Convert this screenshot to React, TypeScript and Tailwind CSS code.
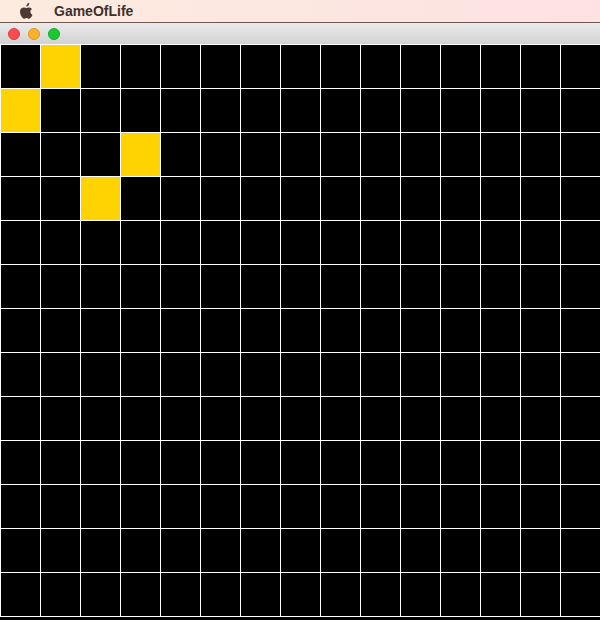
import React from "react";

const ROWS = 13;
const COLS = 15;
const alive = new Set(["0-1", "1-0", "2-3", "3-2"]);

export default function App() {
  const cells = [];
  for (let r = 0; r < ROWS; r++) {
    for (let c = 0; c < COLS; c++) {
      const on = alive.has(`${r}-${c}`);
      cells.push(
        <div key={`${r}-${c}`} className={on ? "bg-[#ffd300]" : "bg-black"} />
      );
    }
  }
  return (
    <div className="w-[600px] h-[620px] bg-black flex flex-col overflow-hidden" style={{ fontFamily: '"Liberation Sans", Arial, sans-serif' }}>
      <div className="h-[23px] flex items-center bg-gradient-to-r from-[#fcebdf] to-[#fde2e2] border-b border-[#6e5550]">
        <svg className="ml-[20px] mb-[1px]" width="14" height="16" viewBox="0 0 170 200" fill="#4b3b34">
          <path d="M150.4 155.6c-2.8 6.4-6.1 12.3-9.900 17.8-5.2 7.4-9.5 12.6-12.7 15.4-5.1 4.7-10.5 7.1-16.3 7.2-4.2 0-9.2-1.2-15.1-3.6-5.9-2.4-11.3-3.6-16.3-3.6-5.2 0-10.8 1.2-16.8 3.6-6 2.4-10.9 3.7-14.5 3.8-5.6.2-11.2-2.2-16.8-7.4-3.6-3.1-8.1-8.5-13.4-16.1-5.700-8.1-10.5-17.5-14.100-28.2C-.6 133-2.6 121.8-2.6 111c0-12.4 2.7-23.1 8-32.1 4.2-7.1 9.8-12.8 16.8-17 7-4.2 14.6-6.3 22.7-6.5 4.5 0 10.3 1.4 17.6 4.1 7.3 2.7 12 4.1 14 4.1 1.5 0 6.7-1.6 15.5-4.9 8.3-3 15.3-4.2 21.1-3.7 15.6 1.3 27.3 7.4 35.1 18.5-14 8.5-20.9 20.3-20.7 35.5.1 11.8 4.4 21.700 12.9 29.5 3.8 3.6 8.1 6.4 12.9 8.4-1 3-2.1 5.8-3.3 8.6zM115 4c0 9.3-3.4 18-10.2 26-8.2 9.5-18 15-28.7 14.2-.1-1.1-.2-2.3-.2-3.6 0-8.9 3.9-18.5 10.8-26.3 3.4-3.9 7.8-7.2 13.2-9.8C105.3 1.9 110.4.5 115.2.2c.1 1.3.1 2.5.1 3.8z" />
        </svg>
        <span className="ml-[20px] text-[14px] font-bold text-[#3e312b] leading-none">GameOfLife</span>
      </div>
      <div className="h-[21px] flex items-center gap-[8px] pl-[8px] bg-gradient-to-b from-[#ebebeb] to-[#d2d2d2]">
        <div className="w-[12px] h-[12px] rounded-full bg-[#fc4b50] border border-[#e0393e]" />
        <div className="w-[12px] h-[12px] rounded-full bg-[#fdb12a] border border-[#e09a1c]" />
        <div className="w-[12px] h-[12px] rounded-full bg-[#1bc831] border border-[#15a927]" />
      </div>
      <div className="bg-white pt-px pb-px pl-px grid grid-cols-[repeat(15,39px)] grid-rows-[repeat(13,43px)] gap-px">
        {cells}
      </div>
    </div>
  );
}
